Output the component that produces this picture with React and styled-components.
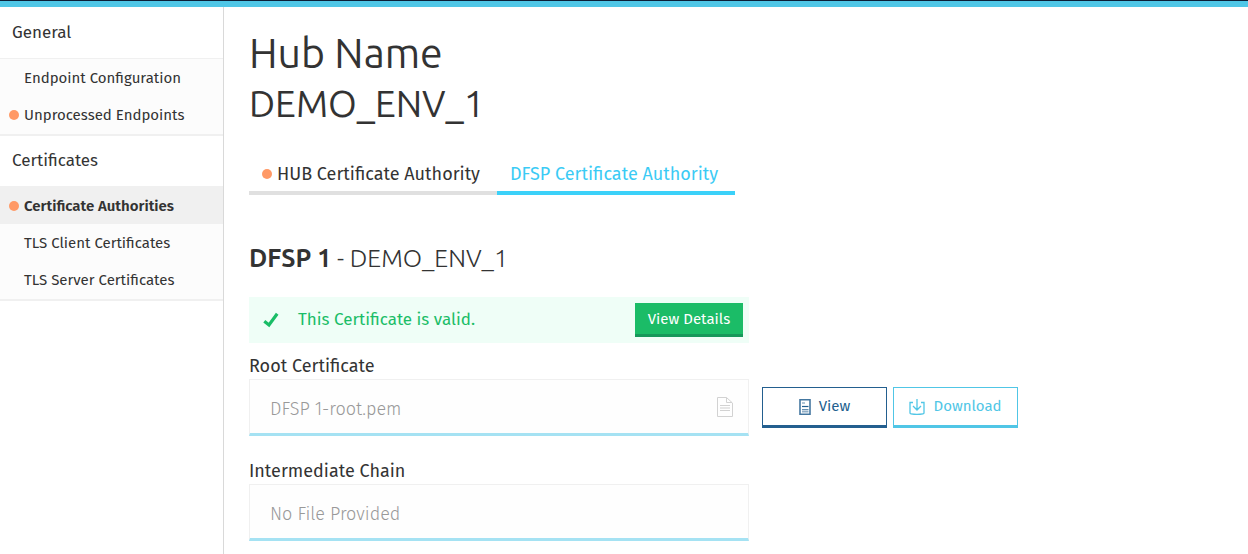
import React from 'react';
import styled, { createGlobalStyle } from 'styled-components';

const GlobalStyle = createGlobalStyle`
  *, *::before, *::after { box-sizing: border-box; }
  body {
    margin: 0;
    background: #fff;
    color: #333;
    font-family: 'Fira Sans', 'Noto Sans', sans-serif;
    font-size: 16px;
  }
  button, input { font-family: inherit; }
`;

const Page = styled.div`
  display: flex;
  flex-direction: column;
  min-height: 100vh;
`;

const TopBar = styled.header`
  height: 7px;
  flex: none;
  background: #4fc7e7;
  border-top: 1px solid #0b2038;
`;

const Body = styled.div`
  display: flex;
  flex: 1;
`;

const Sidebar = styled.nav`
  width: 224px;
  flex: none;
  padding-top: 1px;
  border-right: 1px solid #d9d9d9;
`;

const SectionTitle = styled.h2`
  margin: 0;
  padding: 0 12px;
  border-bottom: 1px solid #f0f0f0;
  font-size: 17px;
  font-weight: 400;
  line-height: 50px;
`;

const NavList = styled.ul`
  margin: 0;
  padding: 0 0 1px;
  list-style: none;
  background: #fcfcfc;
  border-bottom: 2px solid #f0f0f0;
`;

const NavLink = styled.a`
  display: flex;
  align-items: center;
  height: 37px;
  padding-left: ${(p) => (p.$pending ? 9 : 24)}px;
  gap: 5px;
  color: #333;
  background: ${(p) => (p.$active ? '#f0f0f0' : 'transparent')};
  font-size: 15px;
  font-weight: ${(p) => (p.$active ? 600 : 400)};
  text-decoration: none;
  white-space: nowrap;
`;

const Dot = styled.span`
  width: 10px;
  height: 10px;
  flex: none;
  border-radius: 50%;
  background: #ff9966;
`;

const Main = styled.main`
  flex: 1;
  min-width: 0;
  padding: 20px 25px 13px;
`;

const HubTitle = styled.h1`
  margin: 0;
  font-family: Ubuntu, 'Noto Sans', sans-serif;
  font-size: 41px;
  font-weight: 400;
  line-height: 52px;
`;

const EnvTitle = styled.p`
  margin: 0;
  font-family: Ubuntu, 'Noto Sans', sans-serif;
  font-size: 37px;
  line-height: 50px;
`;

const Tabs = styled.div`
  display: flex;
  margin-top: 24px;
`;

const Tab = styled.button`
  display: flex;
  align-items: center;
  gap: 5px;
  height: 42px;
  padding: 4px 17px 0 13px;
  border: 0;
  border-bottom: 4px solid ${(p) => (p.$active ? '#3bd1f9' : '#e0e0e0')};
  background: none;
  color: ${(p) => (p.$active ? '#3bcbf5' : '#333')};
  font-size: 18px;
  font-weight: 400;
  white-space: nowrap;
`;

const GroupTitle = styled.h3`
  margin: 45px 0 21px;
  font-family: Ubuntu, 'Noto Sans', sans-serif;
  font-size: 25px;
  font-weight: 300;
  line-height: 36px;

  b { font-weight: 700; }
`;

const Alert = styled.div`
  display: flex;
  align-items: center;
  max-width: 500px;
  height: 46px;
  margin-bottom: 12px;
  padding: 0 6px 0 14px;
  gap: 19px;
  background: #effef7;
  color: #1abd67;
`;

const AlertText = styled.span`
  flex: 1;
  padding-bottom: 2px;
  font-size: 17px;
`;

const DetailsButton = styled.button`
  width: 108px;
  height: 34px;
  padding: 0;
  border: 0;
  border-bottom: 3px solid #16985a;
  background: #1bbc67;
  color: #fff;
  font-size: 15px;
  font-weight: 400;
`;

const Field = styled.div`
  margin-bottom: 24px;
`;

const Label = styled.label`
  display: block;
  padding-bottom: 2px;
  font-size: 18px;
  line-height: 22px;
`;

const FieldRow = styled.div`
  display: flex;
  align-items: center;
  gap: 6px;
`;

const InputBox = styled.div`
  display: flex;
  align-items: center;
  width: 500px;
  height: 57px;
  margin-right: 7px;
  padding: 0 14px 0 20px;
  border: 1px solid #f0f0f0;
  border-bottom: 3px solid #a5e2f3;
  background: #fefefe;
`;

const Input = styled.input`
  flex: 1;
  min-width: 0;
  padding: 4px 0 0;
  border: 0;
  outline: 0;
  background: none;
  color: #999;
  font-size: 18px;
  font-weight: 300;
`;

const ActionButton = styled.button`
  display: flex;
  align-items: center;
  justify-content: center;
  gap: 8px;
  width: 125px;
  height: 41px;
  padding: 0;
  border: 1px solid;
  border-bottom-width: 3px;
  background: #fff;
  color: ${(p) => (p.$primary ? '#235f8f' : '#50c6e6')};
  font-size: 15px;
  line-height: 18px;

  span { padding-bottom: 2px; }
`;

const CheckIcon = () => (
  <svg width="16" height="16" viewBox="0 0 16 16" fill="none" aria-hidden="true">
    <path d="M1.3 9.2 L6 13 L14.2 1.8" stroke="#1abd67" strokeWidth="3.2" />
  </svg>
);

const FileIcon = () => (
  <svg width="18" height="20" viewBox="0 0 18 20" fill="none" stroke="#d2d2d2" aria-hidden="true">
    <path d="M1.5 .5H10.5L16.5 6V19.5H1.5ZM10.5 .5V5.5H16M4 8.5H14M4 13.5H14" />
    <path d="M4 11H14" stroke="#e6e6e6" strokeWidth="2" />
  </svg>
);

const DocumentIcon = () => (
  <svg width="12" height="16" viewBox="0 0 12 16" fill="none" stroke="currentColor" aria-hidden="true">
    <path d="M1 .8H11V15.2H1Z" strokeWidth="1.6" opacity=".85" />
    <path d="M3 4H6M3 10.5H9.5" opacity=".7" />
    <path d="M3 7.5H9.5" strokeWidth="1.2" />
    <path d="M3 12.5H9.5" strokeWidth="2" opacity=".5" />
  </svg>
);

const DownloadIcon = () => (
  <svg width="16" height="16" viewBox="0 0 16 16" fill="none" stroke="currentColor" aria-hidden="true">
    <path
      d="M4 3.5H1V14Q1 14.8 2 14.8Q8 15.8 14 14.8Q15 14.8 15 14V3.5H12M8 0V10.5M4 7L8 11L12 7"
      strokeWidth="1.3"
    />
  </svg>
);

const sections = [
  {
    title: 'General',
    items: [
      { label: 'Endpoint Configuration' },
      { label: 'Unprocessed Endpoints', pending: true },
    ],
  },
  {
    title: 'Certificates',
    items: [
      { label: 'Certificate Authorities', pending: true, active: true },
      { label: 'TLS Client Certificates' },
      { label: 'TLS Server Certificates' },
    ],
  },
];

export default function App() {
  return (
    <Page>
      <GlobalStyle />
      <TopBar />
      <Body>
        <Sidebar>
          {sections.map((section) => (
            <section key={section.title}>
              <SectionTitle>{section.title}</SectionTitle>
              <NavList>
                {section.items.map((item) => (
                  <li key={item.label}>
                    <NavLink
                      href="#"
                      $pending={item.pending}
                      $active={item.active}
                      aria-current={item.active ? 'page' : undefined}
                    >
                      {item.pending && <Dot />}
                      <span>{item.label}</span>
                    </NavLink>
                  </li>
                ))}
              </NavList>
            </section>
          ))}
        </Sidebar>
        <Main>
          <HubTitle>Hub Name</HubTitle>
          <EnvTitle>DEMO_ENV_1</EnvTitle>
          <Tabs role="tablist">
            <Tab type="button" role="tab" aria-selected="false">
              <Dot />
              <span>HUB Certificate Authority</span>
            </Tab>
            <Tab type="button" role="tab" aria-selected="true" $active>
              DFSP Certificate Authority
            </Tab>
          </Tabs>
          <GroupTitle>
            <b>DFSP 1</b> - DEMO_ENV_1
          </GroupTitle>
          <Alert role="status">
            <CheckIcon />
            <AlertText>This Certificate is valid.</AlertText>
            <DetailsButton type="button">View Details</DetailsButton>
          </Alert>
          <Field>
            <Label htmlFor="root-certificate">Root Certificate</Label>
            <FieldRow>
              <InputBox>
                <Input id="root-certificate" type="text" readOnly value="DFSP 1-root.pem" />
                <FileIcon />
              </InputBox>
              <ActionButton type="button" $primary>
                <DocumentIcon />
                <span>View</span>
              </ActionButton>
              <ActionButton type="button">
                <DownloadIcon />
                <span>Download</span>
              </ActionButton>
            </FieldRow>
          </Field>
          <div>
            <Label htmlFor="intermediate-chain">Intermediate Chain</Label>
            <FieldRow>
              <InputBox>
                <Input id="intermediate-chain" type="text" readOnly value="No File Provided" />
              </InputBox>
            </FieldRow>
          </div>
        </Main>
      </Body>
    </Page>
  );
}
